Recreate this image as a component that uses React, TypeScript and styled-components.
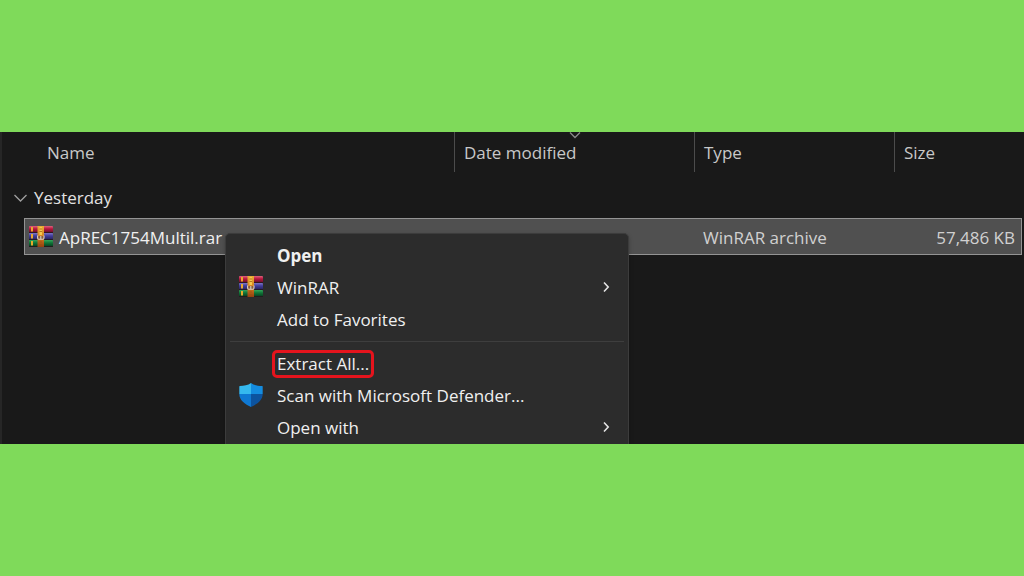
import React from "react";
import styled, { createGlobalStyle } from "styled-components";

const GlobalStyle = createGlobalStyle`
  *, *::before, *::after { box-sizing: border-box; }
  body {
    margin: 0;
    background: #7fda5a;
    font-family: "Open Sans", "Noto Sans", sans-serif;
    font-size: 17px;
    line-height: 24px;
  }
  button { font: inherit; color: inherit; background: none; border: 0; padding: 0; text-align: left; }
`;

const Page = styled.div`
  min-height: 100vh;
  display: flex;
  flex-direction: column;
  justify-content: center;
`;

const Explorer = styled.main`
  position: relative;
  min-height: 312px;
  overflow: hidden;
  background: #191919;
  border-left: 2px solid #262626;
  color: #d8d8d8;
`;

const FileTable = styled.table`
  display: block;
  width: 100%;
  thead, tbody { display: block; }
  th, td { padding: 0; font-weight: 400; text-align: left; }
`;

const HeaderRow = styled.tr`
  display: grid;
  grid-template-columns: minmax(0, 1fr) 240px 200px 130px;
  height: 40px;
`;

const HeaderCell = styled.th<{ $first?: boolean }>`
  && {
    position: relative;
    display: flex;
    align-items: center;
    padding: 2px 0 0 ${(p) => (p.$first ? "45px" : "9px")};
    border-left: ${(p) => (p.$first ? "0" : "1px solid #4c4c4c")};
    color: #c8c8c8;
  }
`;

const SortMark = styled.svg`
  position: absolute;
  top: 0;
  left: 50%;
  width: 12px;
  height: 7px;
  margin-left: -6px;
`;

const GroupRow = styled.tr`
  display: block;
  padding: 14px 0 8px 12px;
  th { display: block; }
`;

const GroupToggle = styled.button`
  display: flex;
  align-items: center;
  gap: 7px;
  color: #e2e2e2;
  svg { width: 13px; height: 8px; }
`;

const FileRow = styled.tr`
  display: grid;
  grid-template-columns: minmax(0, 1fr) 240px 200px 118px;
  align-items: center;
  height: 37px;
  margin: 0 2px 0 22px;
  border: 1px solid #949494;
  background: #505050;
  color: #d0d0d0;
`;

const FileCell = styled.td<{ $end?: boolean }>`
  && {
    padding: 3px ${(p) => (p.$end ? "6px" : "0")} 0 0;
    text-align: ${(p) => (p.$end ? "right" : "left")};
  }
`;

const FileName = styled.td`
  && {
    display: flex;
    align-items: center;
    gap: 6px;
    padding-left: 4px;
    color: #f0f0f0;
  }
  span { padding-top: 3px; }
`;

const Menu = styled.div`
  position: absolute;
  top: 101px;
  left: 223px;
  width: 404px;
  padding: 6px 0;
  border: 1px solid #3c3c3c;
  border-radius: 5px;
  background: #2c2c2c;
  color: #f0f0f0;
  box-shadow: 0 2px 4px #00000040;
`;

const MenuItem = styled.button<{ $bold?: boolean }>`
  && {
    display: grid;
    grid-template-columns: 24px 1fr 8px;
    column-gap: 14px;
    align-items: center;
    width: 100%;
    height: 32px;
    padding: 0 18px 0 13px;
    font-weight: ${(p) => (p.$bold ? 700 : 400)};
  }
`;

const Graphic = styled.span`
  display: flex;
  padding-bottom: 3px;
`;

const Divider = styled.hr`
  height: 1px;
  margin: 5px 4px 6px;
  border: 0;
  background: #3e3e3e;
`;

const Highlight = styled.span`
  display: inline-block;
  margin-left: -5px;
  padding: 0 2px;
  border: 3px solid #e5141d;
  border-radius: 5px;
  line-height: 22px;
`;

const Icon = styled.svg`
  display: block;
  flex: none;
  width: 24px;
  height: 24px;
`;

const Arrow = styled.svg`
  width: 8px;
  height: 12px;
`;

function RarIcon({ id }: { id: string }) {
  const books = [
    { y: 1, light: "#e0627c", mid: "#b8173f", dark: "#5c0e26" },
    { y: 8, light: "#7d77c8", mid: "#423c9c", dark: "#232052" },
    { y: 15, light: "#35a65a", mid: "#0f7638", dark: "#07361c" },
  ];
  return (
    <Icon viewBox="0 0 24 24" aria-hidden="true">
      <defs>
        {books.map((b, i) => (
          <linearGradient key={i} id={`${id}${i}`} x1="0" y1="0" x2="0" y2="1">
            <stop offset="0" stopColor={b.light} />
            <stop offset=".4" stopColor={b.mid} />
            <stop offset="1" stopColor={b.dark} />
          </linearGradient>
        ))}
        <linearGradient id={`${id}s`} x1="0" y1="0" x2="0" y2="1">
          <stop offset="0" stopColor="#e9ac33" />
          <stop offset=".5" stopColor="#d58222" />
          <stop offset="1" stopColor="#93400f" />
        </linearGradient>
      </defs>
      {books.map((b, i) => (
        <g key={i}>
          <rect x="0" y={b.y} width="24" height="7" rx="1" fill={`url(#${id}${i})`} />
          <rect x="2" y={b.y + 1} width="2" height="4.500" fill="#e8a92c" />
          <path d={`M0 ${b.y + 6.5}H24`} stroke="#25171d" strokeWidth=".8" />
        </g>
      ))}
      <rect x="8.500" y="1" width="6.500" height="21" fill={`url(#${id}s)`} />
      <path d="M10.500 2h2.500v8h-2.500z" fill="#f7c64c" />
      <path d="M10.500 4h2.500M10.500 6.500h2.500M10.500 17h2.500M10.500 19.500h2.500" stroke="#98500f" strokeWidth=".7" />
      <path d="M8.500 11h6.500v3h-6.500z" fill="#8a5a34" />
      <path d="M8.600 10.500v2.500q0 1.200 1.200 1.200h4q1.200 0 1.200-1.200v-2.500M11.800 11v3" fill="none" stroke="#d9d0c8" strokeWidth="1.100" />
    </Icon>
  );
}

function ShieldIcon() {
  return (
    <Icon viewBox="0 0 24 26" preserveAspectRatio="none" aria-hidden="true">
      <defs>
        <clipPath id="shield">
          <path d="M12 0C9 2.5 5 3.2 0.8 3.3Q.3 3.4.3 4v8c0 6.5 5 10.600 11.700 14C18.700 22.600 23.700 18.500 23.700 12V4q0-.6-.5-.7C19 3.200 15 2.500 12 0z" />
        </clipPath>
      </defs>
      <g clipPath="url(#shield)">
        <path d="M0 0h12v12H0z" fill="#35b8ee" />
        <path d="M12 0h12v12H12z" fill="#148cdf" />
        <path d="M0 12h12v14H0z" fill="#0f78d2" />
        <path d="M12 12h12v14H12z" fill="#0c539f" />
      </g>
    </Icon>
  );
}

function SubmenuArrow() {
  return (
    <Graphic>
      <Arrow viewBox="0 0 8 12" aria-hidden="true">
        <path d="M2 1.500 6.200 6 2 10.500" fill="none" stroke="#e4e4e4" strokeWidth="1.600" />
      </Arrow>
    </Graphic>
  );
}

type Entry = {
  label: string;
  icon?: React.ReactNode;
  bold?: boolean;
  submenu?: boolean;
  marked?: boolean;
};

const groups: Entry[][] = [
  [
    { label: "Open", bold: true },
    { label: "WinRAR", icon: <RarIcon id="menuRar" />, submenu: true },
    { label: "Add to Favorites" },
  ],
  [
    { label: "Extract All...", marked: true },
    { label: "Scan with Microsoft Defender...", icon: <ShieldIcon /> },
    { label: "Open with", submenu: true },
  ],
];

function ContextMenu() {
  return (
    <Menu role="menu">
      {groups.map((entries, g) => (
        <React.Fragment key={g}>
          {g > 0 && <Divider />}
          {entries.map((e) => (
            <MenuItem key={e.label} type="button" role="menuitem" $bold={e.bold}>
              <Graphic>{e.icon}</Graphic>
              <span>{e.marked ? <Highlight>{e.label}</Highlight> : e.label}</span>
              {e.submenu && <SubmenuArrow />}
            </MenuItem>
          ))}
        </React.Fragment>
      ))}
    </Menu>
  );
}

export default function App() {
  return (
    <Page>
      <GlobalStyle />
      <Explorer>
        <FileTable>
          <thead>
            <HeaderRow>
              <HeaderCell $first>Name</HeaderCell>
              <HeaderCell>
                Date modified
                <SortMark viewBox="0 0 12 7" aria-hidden="true">
                  <path d="M1 .5 6 5.500 11 .5" fill="none" stroke="#8a8a8a" strokeWidth="1.300" />
                </SortMark>
              </HeaderCell>
              <HeaderCell>Type</HeaderCell>
              <HeaderCell>Size</HeaderCell>
            </HeaderRow>
          </thead>
          <tbody>
            <GroupRow>
              <th colSpan={4}>
                <GroupToggle type="button" aria-expanded="true">
                  <svg viewBox="0 0 13 8" aria-hidden="true">
                    <path d="M.5 1 6.500 7 12.500 1" fill="none" stroke="#a0a0a0" strokeWidth="1.300" />
                  </svg>
                  Yesterday
                </GroupToggle>
              </th>
            </GroupRow>
            <FileRow>
              <FileName>
                <RarIcon id="fileRar" />
                <span>ApREC1754Multil.rar</span>
              </FileName>
              <FileCell />
              <FileCell>WinRAR archive</FileCell>
              <FileCell $end>57,486 KB</FileCell>
            </FileRow>
          </tbody>
        </FileTable>
        <ContextMenu />
      </Explorer>
    </Page>
  );
}
